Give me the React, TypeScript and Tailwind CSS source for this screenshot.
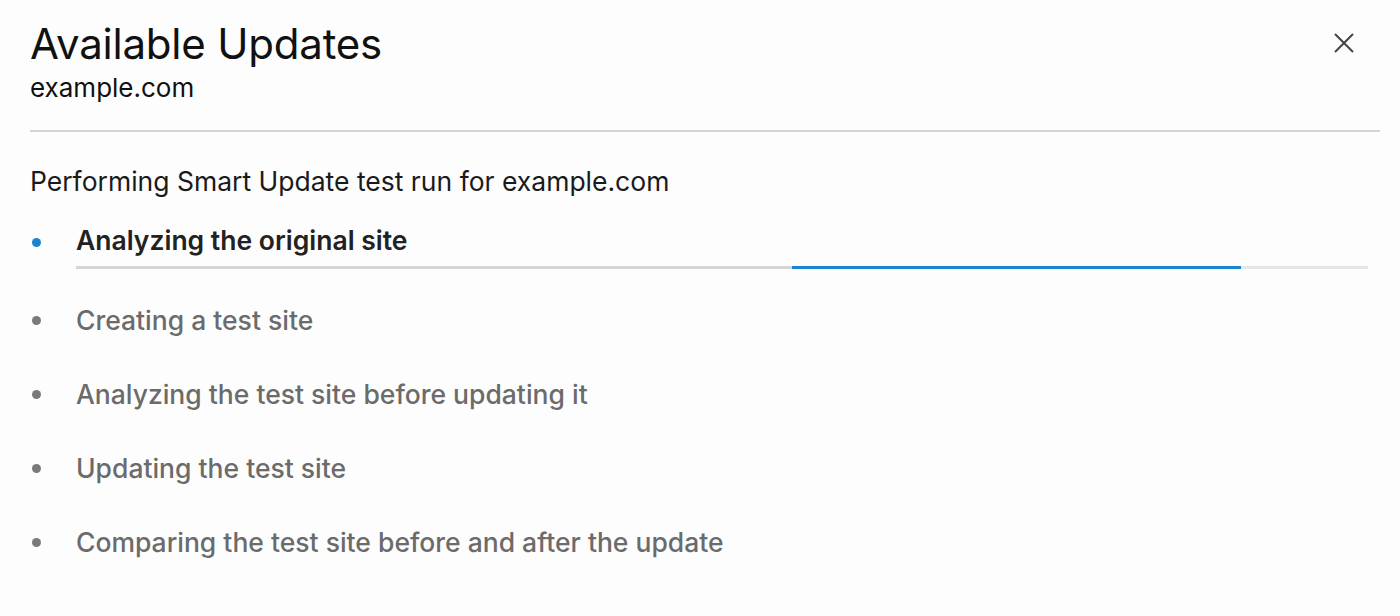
import React from "react";

const steps = [
  "Creating a test site",
  "Analyzing the test site before updating it",
  "Updating the test site",
  "Comparing the test site before and after the update",
];

export default function App() {
  return (
    <div
      className="w-[1400px] h-[616px] bg-[#fdfdfd] overflow-hidden"
      style={{ fontFamily: "Inter, 'Noto Sans', sans-serif" }}
    >
      <div className="pl-[30px] pr-[20px]">
        <div className="flex items-start justify-between pt-[20px]">
          <div className="flex flex-col">
            <h1 className="text-[42px] leading-[48px] text-[#111] font-normal tracking-[-0.2px]">
              Available Updates
            </h1>
            <div className="text-[26px] leading-[30px] text-[#111] mt-[5px]">example.com</div>
          </div>
          <button className="mt-[13px] mr-[26px] text-[#444]" aria-label="Close">
            <svg width="20" height="20" viewBox="0 0 20 20" fill="none" stroke="currentColor" strokeWidth="2">
              <path d="M1 1L19 19M19 1L1 19" />
            </svg>
          </button>
        </div>
        <div className="mt-[27px] h-[2px] bg-[#d4d4d4]" />
        <div className="mt-[34px] text-[26.5px] leading-[30px] text-[#1a1a1a]">
          Performing Smart Update test run for example.com
        </div>
        <div className="mt-[29px] flex">
          <div className="w-[46px] flex justify-start pl-[2px] pt-[13px]">
            <div className="w-[9px] h-[9px] rounded-full bg-[#1a84cf]" />
          </div>
          <div className="flex-1 pr-[12px]">
            <div className="text-[26.5px] leading-[30px] font-semibold text-[#222]">
              Analyzing the original site
            </div>
            <div className="mt-[11px] h-[3px] flex">
              <div className="w-[716px] bg-[#d6d6d6]" />
              <div className="w-[449px] bg-[#1a84cf]" />
              <div className="flex-1 bg-[#e6e6e6]" />
            </div>
          </div>
        </div>
        <div className="mt-[36px] flex flex-col gap-[44px]">
          {steps.map((s) => (
            <div key={s} className="flex items-center">
              <div className="w-[46px] pl-[2px]">
                <div className="w-[9px] h-[9px] rounded-full bg-[#7a7a7a]" />
              </div>
              <div className="text-[26.5px] leading-[30px] font-medium text-[#6b6b6b]">{s}</div>
            </div>
          ))}
        </div>
      </div>
    </div>
  );
}
